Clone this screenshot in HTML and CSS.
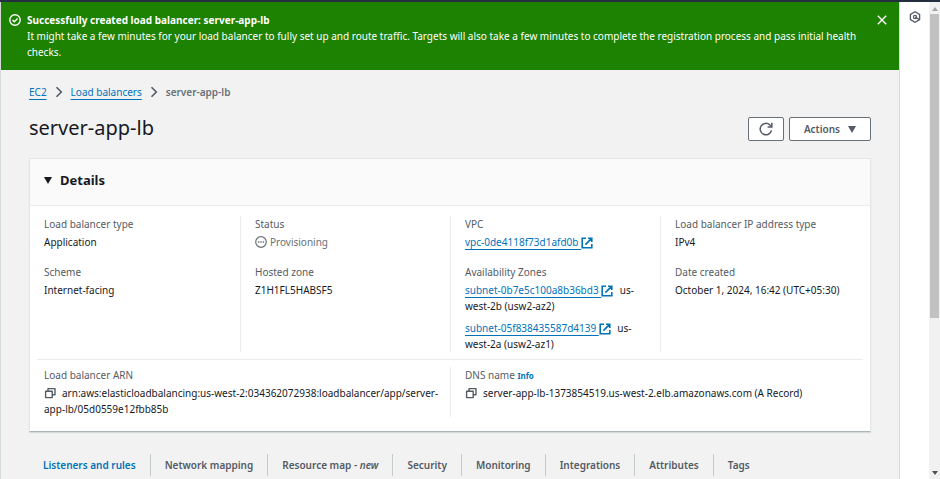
FILE: index.html
```html
<!DOCTYPE html>
<html lang="en">
<head>
<meta charset="utf-8">
<title>server-app-lb</title>
<link rel="stylesheet" href="styles.css">
</head>
<body>
<svg class="defs" aria-hidden="true">
  <symbol id="external" viewBox="0 0 12 12"><path d="M5 1.2H1.2v9.6h9.6V7M7 1.2h3.8V5M10.6 1.4 4.4 7.6" fill="none" stroke="currentColor" stroke-width="1.6"/></symbol>
  <symbol id="copy" viewBox="0 0 12 12"><path d="M1.6 4.2h6.6v6.4H1.6zM4 4V1.6h7v6.2H8.4" fill="none" stroke="currentColor" stroke-width="1.4" stroke-linejoin="round"/></symbol>
  <symbol id="chevron" viewBox="0 0 8 12"><path d="m1.5 1.2 4.8 4.8-4.8 4.8" fill="none" stroke="currentColor" stroke-width="1.6"/></symbol>
</svg>
<div class="topbar"></div>
<div class="app">
  <main class="main">
    <section class="flash" role="status">
      <svg class="flash-icon" viewBox="0 0 12 12"><circle cx="6" cy="6" r="5.2" fill="none" stroke="currentColor" stroke-width="1.4"/><path d="m3.5 6 1.8 1.8 3.3-3.4" fill="none" stroke="currentColor" stroke-width="1.4"/></svg>
      <div class="flash-text">
        <strong>Successfully created load balancer: server-app-lb</strong>
        <p>It might take a few minutes for your load balancer to fully set up and route traffic. Targets will also take a few minutes to complete the registration process and pass initial health checks.</p>
      </div>
      <button class="close" aria-label="Dismiss"><svg viewBox="0 0 10 10"><path d="m.8.8 8.4 8.4M9.2.8.8 9.2" stroke="currentColor" stroke-width="1.4"/></svg></button>
    </section>
    <div class="content">
      <nav class="crumbs" aria-label="Breadcrumbs">
        <a href="#">EC2</a>
        <svg class="chevron"><use href="#chevron"/></svg>
        <a href="#">Load balancers</a>
        <svg class="chevron"><use href="#chevron"/></svg>
        <span>server-app-lb</span>
      </nav>
      <header class="heading">
        <h1>server-app-lb</h1>
        <div class="buttons">
          <button class="btn btn-icon" aria-label="Refresh"><svg viewBox="0 0 12 12"><path d="M10.7 7.2A4.9 4.9 0 1 1 9.4 2.6L11 4" fill="none" stroke="currentColor" stroke-width="1.3"/><path d="M11 .6v3.6H7.4" fill="none" stroke="currentColor" stroke-width="1.3"/></svg></button>
          <button class="btn">Actions <svg class="caret" viewBox="0 0 8 7"><path d="M0 0h8L4 7z" fill="currentColor"/></svg></button>
        </div>
      </header>
      <section class="card">
        <h2><svg class="caret" viewBox="0 0 8 7"><path d="M0 0h8L4 7z" fill="currentColor"/></svg>Details</h2>
        <div class="row row-four">
          <dl>
            <div><dt>Load balancer type</dt><dd>Application</dd></div>
            <div><dt>Scheme</dt><dd>Internet-facing</dd></div>
          </dl>
          <dl>
            <div><dt>Status</dt><dd class="pending"><svg viewBox="0 0 12 12"><circle cx="6" cy="6" r="5.3" fill="none" stroke="currentColor" stroke-width="1.2"/><path d="M2.9 6h1.4M5.3 6h1.4M7.7 6h1.4" stroke="currentColor" stroke-width="1.4"/></svg>Provisioning</dd></div>
            <div><dt>Hosted zone</dt><dd>Z1H1FL5HABSF5</dd></div>
          </dl>
          <dl>
            <div><dt>VPC</dt><dd><a href="#">vpc-0de4118f73d1afd0b&nbsp;</a><svg class="external"><use href="#external"/></svg></dd></div>
            <div><dt>Availability Zones</dt>
              <dd><a href="#">subnet-0b7e5c100a8b36bd3&nbsp;</a><svg class="external"><use href="#external"/></svg> us-<br>west-2b (usw2-az2)</dd>
              <dd class="next"><a href="#">subnet-05f838435587d4139&nbsp;</a><svg class="external"><use href="#external"/></svg> us-<br>west-2a (usw2-az1)</dd></div>
          </dl>
          <dl>
            <div><dt>Load balancer IP address type</dt><dd>IPv4</dd></div>
            <div><dt>Date created</dt><dd>October 1, 2024, 16:42 (UTC+05:30)</dd></div>
          </dl>
        </div>
        <div class="row row-two">
          <dl>
            <div><dt>Load balancer ARN</dt><dd><button class="copy" aria-label="Copy ARN"><svg><use href="#copy"/></svg></button>arn:aws:elasticloadbalancing:us-west-2:034362072938:loadbalancer/app/server-<wbr>app-lb/05d0559e12fbb85b</dd></div>
          </dl>
          <dl>
            <div><dt>DNS name <a class="info" href="#">Info</a></dt><dd><button class="copy" aria-label="Copy DNS name"><svg><use href="#copy"/></svg></button>server-app-lb-1373854519.us-west-2.elb.amazonaws.com (A Record)</dd></div>
          </dl>
        </div>
      </section>
      <nav class="tabs" aria-label="Load balancer sections">
        <a class="active" href="#">Listeners and rules</a>
        <a href="#">Network mapping</a>
        <a href="#">Resource map - <em>new</em></a>
        <a href="#">Security</a>
        <a href="#">Monitoring</a>
        <a href="#">Integrations</a>
        <a href="#">Attributes</a>
        <a href="#">Tags</a>
      </nav>
    </div>
  </main>
  <aside class="tools">
    <button aria-label="Open tools"><svg viewBox="0 0 12 12"><path d="m6 .8 4.6 2.6v5.2L6 11.2 1.4 8.6V3.4z" fill="none" stroke="currentColor" stroke-width="1.3"/><circle cx="6" cy="6" r="1.6" fill="none" stroke="currentColor" stroke-width="1.2"/><path d="m6 6 4 2.4" stroke="currentColor" stroke-width="1.3"/></svg></button>
  </aside>
  <div class="scroll" aria-hidden="true">
    <svg class="up" viewBox="0 0 6 4"><path d="M0 4h6L3 0z" fill="currentColor"/></svg>
    <div class="track"><div class="thumb"></div></div>
    <svg class="down" viewBox="0 0 6 4"><path d="M0 0h6L3 4z" fill="currentColor"/></svg>
  </div>
</div>
</body>
</html>
```
FILE: styles.css
```css
* { box-sizing: border-box; margin: 0; }

body {
  height: 100vh;
  display: flex;
  flex-direction: column;
  overflow: hidden;
  font: 10px/16px "Noto Sans", "Open Sans", sans-serif;
  color: #16191f;
  background: #f2f2f2;
}

button { font: inherit; color: inherit; border: 0; padding: 0; background: none; }
a { color: #0073bb; }
svg { flex: none; }

.defs { position: absolute; width: 0; height: 0; }
.topbar { flex: none; height: 2px; background: #232f3e; }
.app { flex: 1; min-height: 0; display: flex; }
.main { flex: 1; min-width: 0; border-left: 1px solid #d5dbdb; border-right: 1px solid #d5dbdb; overflow: hidden; }

.flash {
  display: flex;
  align-items: flex-start;
  padding: 10px 12px 10px 8px;
  color: #fff;
  background: #1d8102;
}
.flash-icon { width: 12px; height: 12px; margin: 2px 6px 0 0; }
.flash-text { flex: 1; padding-right: 8px; }
.flash-text strong { display: block; }
.close { display: flex; margin-top: 3px; }
.close svg { width: 10px; height: 10px; }

.content { padding: 14px 28px 0; }
.crumbs { display: flex; align-items: center; gap: 8px; }
.crumbs a, dd a { text-decoration: underline; text-underline-offset: 3px; text-decoration-thickness: 1px; }
.crumbs span { font-weight: 600; color: #687078; }
.chevron { width: 8px; height: 12px; color: #545b64; }

.heading { display: flex; align-items: center; justify-content: space-between; margin-top: 14px; }
h1 { font-size: 20px; line-height: 28px; font-weight: 400; }
.buttons { display: flex; gap: 5px; padding-top: 2px; }
.btn {
  display: flex;
  align-items: center;
  gap: 8px;
  height: 24px;
  padding: 0 14px;
  font-weight: 600;
  color: #545b64;
  background: #fff;
  border: 1px solid #687078;
  border-radius: 2px;
}
.btn-icon { padding: 0 10px; }
.btn-icon svg { width: 14px; height: 14px; }
.caret { width: 8px; height: 7px; }

.card {
  margin-top: 16px;
  background: #fff;
  border: 1px solid #e3e7e7;
  border-bottom-color: #aab7b8;
  box-shadow: 0 1px 1px #d5dbdb;
}
h2 {
  display: flex;
  align-items: center;
  gap: 8px;
  padding: 10px 14px 14px;
  font-size: 13px;
  line-height: 22px;
  background: #fafafa;
  border-bottom: 1px solid #eaeded;
}
.row { display: grid; }
.row-four { grid-template-columns: repeat(4, 1fr); padding: 10px 0 7px; }
.row-two { grid-template-columns: repeat(2, 1fr); margin: 0 7px; padding: 7px 0 14px; border-top: 1px solid #eaeded; }
dl { min-width: 0; padding-left: 14px; display: flex; flex-direction: column; gap: 14px; }
dl + dl { border-left: 1px solid #eaeded; }
.row-two dl:first-child { padding-left: 7px; }
dt { margin-bottom: 2px; color: #545b64; }
.pending { display: flex; align-items: center; gap: 3px; color: #687078; }
.pending svg { width: 12px; height: 12px; }
.next { margin-top: 6px; }
.external { width: 12px; height: 12px; margin-right: 4px; vertical-align: -3px; color: #0073bb; }
.info { font-size: 8px; font-weight: 700; line-height: 1; text-decoration: none; }
.copy { display: inline-block; margin: 2px 6px 0 0; vertical-align: top; color: #545b64; }
.copy svg { display: block; width: 12px; height: 12px; }

.tabs { display: flex; margin-top: 22px; }
.tabs a {
  padding: 3px 14px;
  font-weight: 600;
  color: #545b64;
  text-decoration: none;
  white-space: nowrap;
}
.tabs a + a { border-left: 1px solid #c3cbcc; }
.tabs .active { color: #0073bb; }

.tools { width: 29px; padding-top: 9px; display: flex; justify-content: center; align-items: flex-start; background: #fff; }
.tools button { display: flex; color: #545b64; }
.tools svg { width: 12px; height: 12px; }

.scroll { width: 11px; display: flex; flex-direction: column; align-items: center; background: #f1f1f1; color: #505050; }
.scroll svg { width: 6px; height: 4px; }
.up { margin: 5px 0 3px; color: #a3a3a3; }
.down { margin: 4px 0; }
.track { flex: 1; align-self: stretch; padding: 0 1px; }
.thumb { height: 67%; background: #c1c1c1; }
```
